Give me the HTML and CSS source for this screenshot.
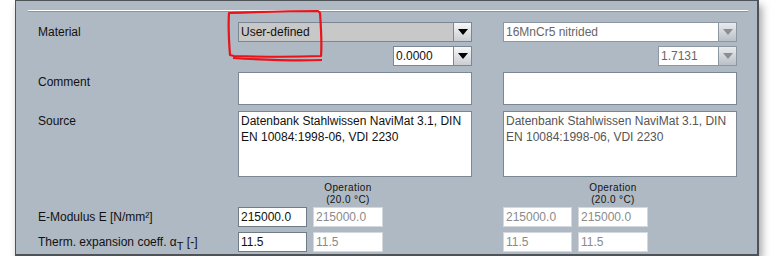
FILE: index.html
```html
<!DOCTYPE html>
<html lang="en">
<head>
    <meta charset="UTF-8">
    <title>Material</title>
    <link rel="stylesheet" href="styles.css">
</head>
<body>
    <div class="panel">
        <div class="separator"></div>

        <div class="row row-material">
            <div class="label">Material</div>
            <div class="combo combo-active">
                <span class="combo-text">User-defined</span>
                <span class="combo-btn"><span class="tri"></span></span>
            </div>
            <div class="combo combo-disabled">
                <span class="combo-text">16MnCr5 nitrided</span>
                <span class="combo-btn"><span class="tri"></span></span>
            </div>
        </div>

        <div class="row row-number">
            <div></div>
            <div class="combo combo-small">
                <span class="combo-text">0.0000</span>
                <span class="combo-btn"><span class="tri"></span></span>
            </div>
            <div class="combo combo-small combo-disabled">
                <span class="combo-text">1.7131</span>
                <span class="combo-btn"><span class="tri"></span></span>
            </div>
        </div>

        <div class="row row-comment">
            <div class="label label-top">Comment</div>
            <div class="area area-comment"></div>
            <div class="area area-comment"></div>
        </div>

        <div class="row row-source">
            <div class="label label-top">Source</div>
            <div class="area area-source">Datenbank Stahlwissen NaviMat 3.1, DIN EN 10084:1998-06, VDI 2230</div>
            <div class="area area-source area-disabled">Datenbank Stahlwissen NaviMat 3.1, DIN EN 10084:1998-06, VDI 2230</div>
        </div>

        <div class="row row-head">
            <div></div>
            <div class="pair">
                <div></div>
                <div class="head">Operation<br>(20.0 °C)</div>
            </div>
            <div class="pair">
                <div></div>
                <div class="head">Operation<br>(20.0 °C)</div>
            </div>
        </div>

        <div class="row row-field">
            <div class="label">E-Modulus E [N/mm²]</div>
            <div class="pair">
                <div class="field">215000.0</div>
                <div class="field field-disabled">215000.0</div>
            </div>
            <div class="pair">
                <div class="field field-disabled">215000.0</div>
                <div class="field field-disabled">215000.0</div>
            </div>
        </div>

        <div class="row row-field row-last">
            <div class="label">Therm. expansion coeff. α<sub>T</sub> [-]</div>
            <div class="pair">
                <div class="field">11.5</div>
                <div class="field field-disabled">11.5</div>
            </div>
            <div class="pair">
                <div class="field field-disabled">11.5</div>
                <div class="field field-disabled">11.5</div>
            </div>
        </div>
    </div>

    <!-- red hand-drawn mark around the material combo -->
    <svg class="mark" width="110" height="60" viewBox="0 0 110 60">
        <path d="M3 4 C30 3 60 2 92 2 L94 4 C95 18 96 34 95 47 C70 48 40 48 8 47 L4 46 C3 33 2 18 3 4 Z M7 49 C40 51 70 52 96 51" fill="none" stroke="#e8141a" stroke-width="2.2" stroke-linejoin="round"/>
    </svg>
</body>
</html>
```

FILE: styles.css
```css
body {
    margin: 0;
    background: #fff;
    font-family: "Liberation Sans", Arial, sans-serif;
    font-size: 12px;
    color: #111;
    position: relative;
}

.panel {
    margin-left: 15px;
    width: 744px;
    height: 256px;
    background: #afb9c3;
    border: 1px solid #4e5358;
    border-width: 1px 2px 2px 1px;
    box-shadow: 3px 5px 8px rgba(0, 0, 0, 0.35);
    box-sizing: border-box;
    padding: 0 0 0 22px;
}

.separator {
    margin: 9px 0 0 -10px;
    width: 720px;
    height: 1px;
    background: #fff;
    border-bottom: 1px solid #8a949e;
}

.row {
    display: grid;
    grid-template-columns: 169px 234px 234px;
    column-gap: 31px;
}

.row-material { margin-top: 10px; }
.row-number { margin-top: 4px; }
.row-comment { margin-top: 6px; }
.row-source { margin-top: 6px; }
.row-head { margin-top: 5px; }
.row-field { margin-top: 0; }
.row-last { margin-top: 5px; }

.label {
    align-self: center;
    white-space: nowrap;
}

.label-top {
    align-self: start;
    padding-top: 3px;
}

.label sub {
    font-size: 11px;
    vertical-align: -4px;
    line-height: 0;
}

.combo {
    height: 20px;
    display: flex;
    border: 1px solid #7b8794;
    background: #fff;
    box-sizing: border-box;
}

.combo-active {
    background: #c8c8c8;
}

.combo-small {
    width: 79px;
    justify-self: end;
}

.combo-text {
    flex: 1;
    padding-left: 2px;
    line-height: 18px;
    white-space: nowrap;
    overflow: hidden;
}

.combo-btn {
    width: 17px;
    border-left: 1px solid #7b8794;
    background: linear-gradient(#f6f7f8, #c9cdd2);
    display: flex;
    align-items: center;
    justify-content: center;
}

.tri {
    width: 0;
    height: 0;
    border-left: 5px solid transparent;
    border-right: 5px solid transparent;
    border-top: 6px solid #000;
}

.combo-disabled {
    color: #666;
    border-color: #8c97a2;
}

.combo-disabled .combo-btn {
    border-left-color: #8c97a2;
    background: linear-gradient(#e9ebee, #b9c0c7);
}

.combo-disabled .tri {
    border-top-color: #8a8f94;
}

.area {
    background: #fff;
    border: 1px solid #7b8794;
    box-sizing: border-box;
    padding: 1px 2px;
    line-height: 16px;
}

.area-comment { height: 33px; }
.area-source { height: 66px; }

.area-disabled {
    color: #555;
}

.pair {
    display: grid;
    grid-template-columns: 69px 70px;
    column-gap: 6px;
}

.head {
    font-size: 10px;
    letter-spacing: 0.4px;
    line-height: 12px;
    text-align: center;
    padding-bottom: 1px;
}

.field {
    height: 20px;
    background: #fff;
    border: 1px solid #6f7b87;
    box-sizing: border-box;
    line-height: 18px;
    padding-left: 2px;
}

.field-disabled {
    color: #8a8a8a;
    border-color: #d4d9de;
}

.mark {
    position: absolute;
    left: 226px;
    top: 9px;
}
```
